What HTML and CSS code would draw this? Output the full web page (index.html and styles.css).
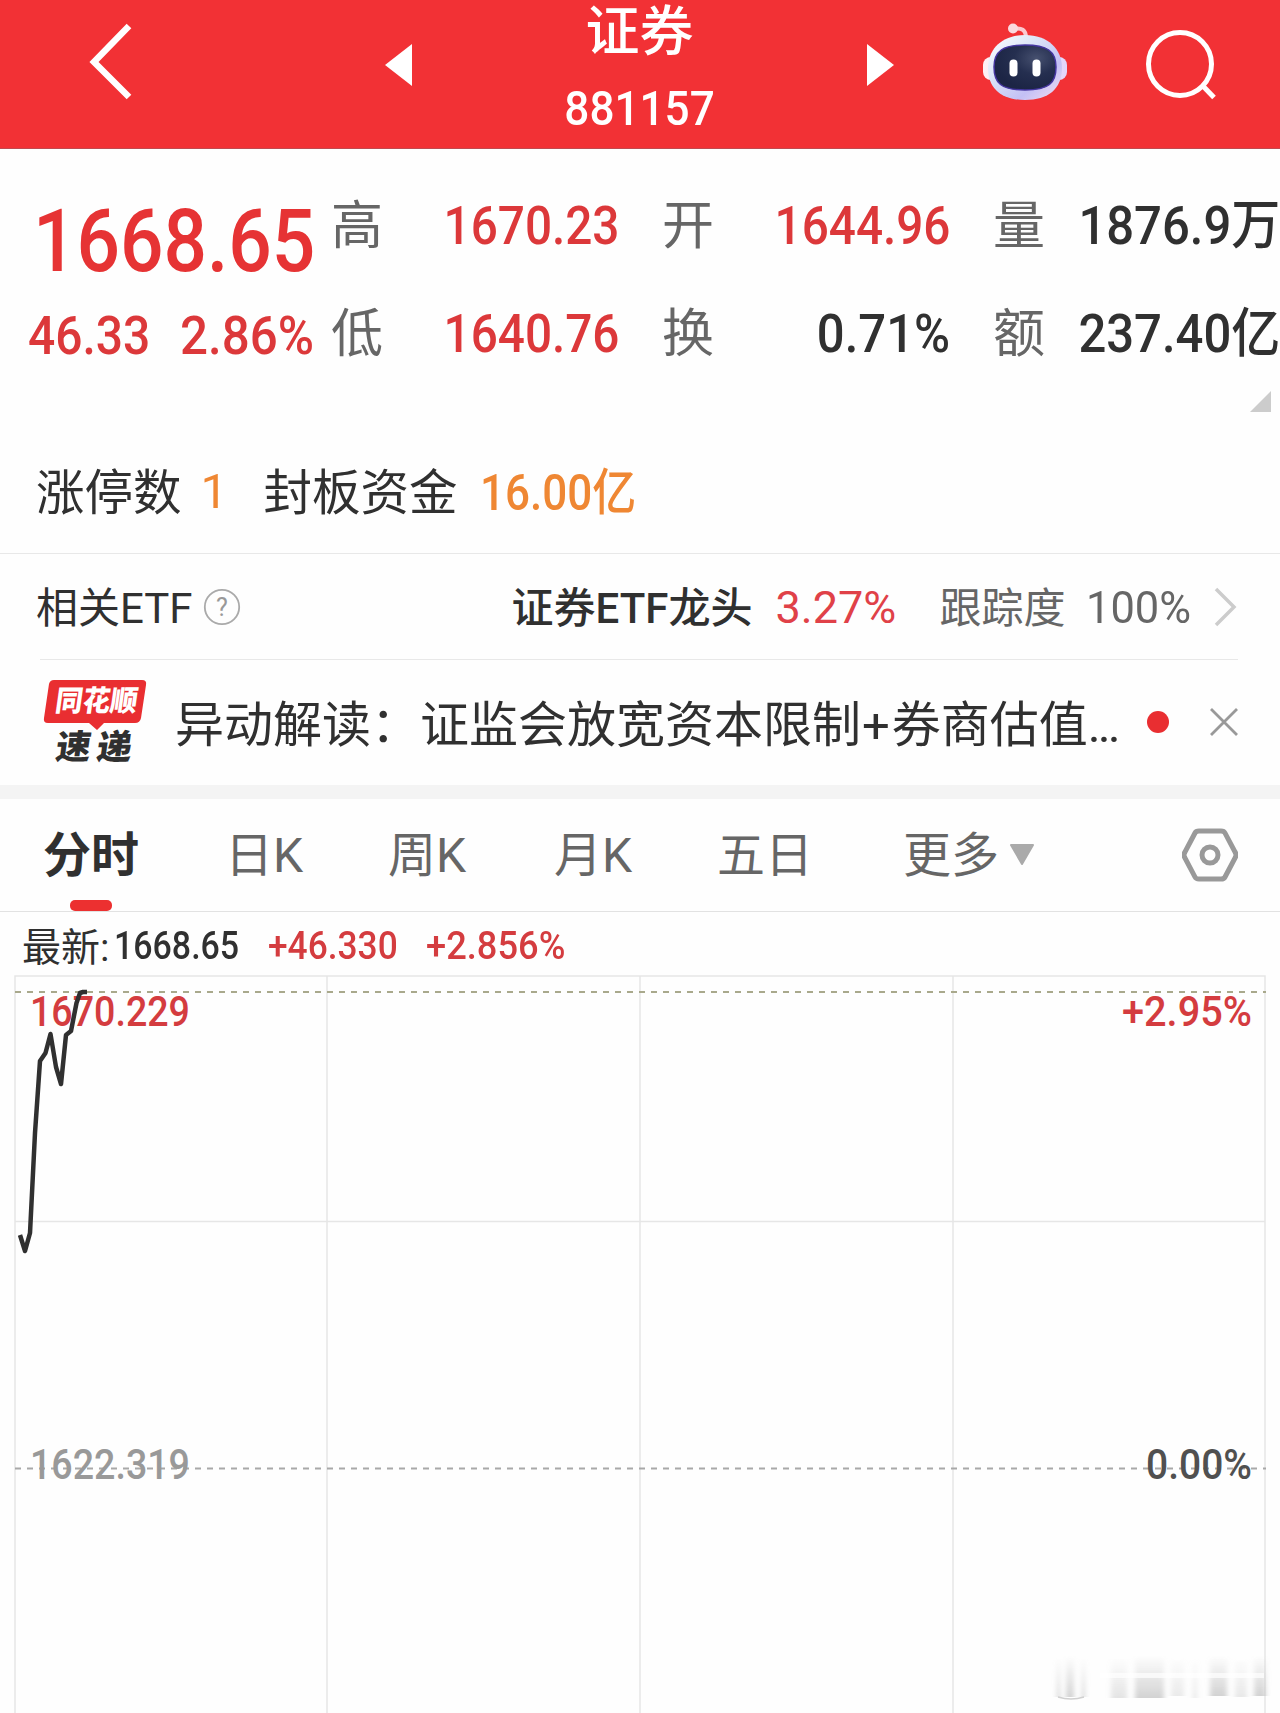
FILE: index.html
```html
<!DOCTYPE html>
<html lang="zh-CN">
<head>
<meta charset="utf-8">
<title>证券 881157</title>
<link rel="stylesheet" href="styles.css">
</head>
<body>
<header class="topbar">
  <svg class="back" width="50" height="80" viewBox="0 0 50 80"><path d="M44 5 9 41l35 35" fill="none" stroke="#fff" stroke-width="6.500"/></svg>
  <svg class="prev" width="27" height="42" viewBox="0 0 27 42"><path d="M27 0v42L0 21z" fill="#fff"/></svg>
  <div class="title">
    <h1>证券</h1>
    <div class="code"><span class="fit">881157</span></div>
  </div>
  <svg class="next" width="27" height="42" viewBox="0 0 27 42"><path d="M0 0v42l27-21z" fill="#fff"/></svg>
  <svg class="robot" width="86" height="82" viewBox="0 0 86 82">
    <defs>
      <linearGradient id="shell" x1="0" y1="0" x2="1" y2="1"><stop offset="0" stop-color="#fff"/><stop offset=".35" stop-color="#dce6f8"/><stop offset=".7" stop-color="#c3c0f5"/><stop offset="1" stop-color="#f6dff0"/></linearGradient>
      <linearGradient id="ear" x1="0" y1="0" x2="1" y2="0"><stop offset="0" stop-color="#fff0f4"/><stop offset="1" stop-color="#e3d5fb"/></linearGradient>
      <radialGradient id="visor" cx=".68" cy=".3" r=".7"><stop offset="0" stop-color="#46506f"/><stop offset=".5" stop-color="#252f50"/><stop offset="1" stop-color="#1c2545"/></radialGradient>
    </defs>
    <path d="M31 9q13-3 13 9" fill="none" stroke="#fbc9d0" stroke-width="4"/>
    <circle cx="31" cy="8.500" r="5" fill="#fbd9df"/>
    <rect x="1" y="37" width="84" height="23" rx="8" fill="url(#ear)"/>
    <path d="M43 15c23 0 37 14 37 33 0 21-14 32-37 32S6 69 6 48c0-19 14-33 37-33z" fill="url(#shell)"/>
    <path d="M43 25c22 0 31 6 31 22s-7 23-31 23-31-7-31-23 9-22 31-22z" fill="url(#visor)" stroke="#4536a0" stroke-width="1.500"/>
    <rect x="27.500" y="39.500" width="8" height="17" rx="4" fill="#fff"/>
    <rect x="50.500" y="39.500" width="8" height="17" rx="4" fill="#fff"/>
  </svg>
  <svg class="search" width="72" height="72" viewBox="0 0 72 72"><circle cx="34" cy="35" r="31.500" fill="none" stroke="#fff" stroke-width="5"/><path d="m56 56 12 12.500" stroke="#fff" stroke-width="5"/></svg>
</header>

<section class="quote">
  <div class="price">
    <div class="last"><span class="fit">1668.65</span></div>
    <div class="change"><span class="fit">46.33</span><span class="fit">2.86%</span></div>
  </div>
  <dl class="stats">
    <div><dt>高</dt><dd class="up">1670.23</dd></div>
    <div><dt>开</dt><dd class="up">1644.96</dd></div>
    <div><dt>量</dt><dd>1876.9万</dd></div>
    <div><dt>低</dt><dd class="up">1640.76</dd></div>
    <div><dt>换</dt><dd>0.71%</dd></div>
    <div><dt>额</dt><dd>237.40亿</dd></div>
  </dl>
</section>
<div class="expand"><svg width="21" height="21" viewBox="0 0 21 21"><path d="M21 0v21H0z" fill="#ccc"/></svg></div>

<section class="limit">
  <span>涨停数</span><b class="one">1</b><span class="seal">封板资金</span><b class="fund"><span class="fit">16.00亿</span></b>
</section>

<section class="etf">
  <span class="etf-key">相关ETF</span>
  <svg class="help" width="38" height="38" viewBox="0 0 38 38"><circle cx="19" cy="19" r="17.200" fill="none" stroke="#aaa" stroke-width="1.800"/><text x="19" y="27.500" text-anchor="middle" class="help-mark">?</text></svg>
  <span class="etf-name">证券ETF龙头</span><span class="etf-rate">3.27%</span><span class="track">跟踪度</span><span class="track-rate">100%</span>
  <svg class="more" width="24" height="40" viewBox="0 0 24 40"><path d="m2 2 18 18L2 38" fill="none" stroke="#ccc" stroke-width="3.500"/></svg>
</section>

<section class="news">
  <svg class="badge" width="110" height="108" viewBox="0 -10 110 108">
    <path d="M11 2h88q5 0 4 5l-5 33q-1 5-6 5H61l-7 7-8-7H5q-5 0-4-5l5-34q1-4 5-4z" fill="#e92e31"/>
    <g transform="skewX(-8)"><text x="16" y="33" textLength="82" lengthAdjust="spacingAndGlyphs" class="badge-top">同花顺</text>
    <text x="23" y="81" textLength="35" lengthAdjust="spacingAndGlyphs" class="badge-low">速</text><text x="64" y="81" textLength="35" lengthAdjust="spacingAndGlyphs" class="badge-low">递</text></g>
  </svg>
  <span class="headline">异动解读：证监会放宽资本限制<span class="plus">+</span>券商估值<span class="ellipsis">...</span></span>
  <i class="dot"></i>
  <svg width="28" height="28" viewBox="0 0 28 28"><path d="m1 1 26 26M27 1 1 27" stroke="#999" stroke-width="2.800"/></svg>
</section>

<nav class="tabs">
  <span class="tab active">分时</span><span class="tab">日K</span><span class="tab">周K</span><span class="tab">月K</span><span class="tab">五日</span><span class="tab">更多</span>
  <svg class="caret" width="26" height="22" viewBox="0 0 26 22"><path d="M2 1h22l-11 19z" fill="#aaa" stroke="#aaa" stroke-width="2" stroke-linejoin="round"/></svg>
  <svg class="settings" width="56" height="54" viewBox="0 0 56 54"><path d="M17 3h22q3 0 4 2l10 19q2 3 0 6L43 49q-1 2-4 2H17q-3 0-4-2L3 30q-2-3 0-6L13 5q1-2 4-2z" fill="none" stroke="#999" stroke-width="5"/><circle cx="28" cy="27" r="8" fill="none" stroke="#999" stroke-width="5"/></svg>
</nav>

<section class="latest"><span class="latest-key">最新:</span><span class="fit now">1668.65</span><span class="fit diff">+46.330</span><span class="fit rate">+2.856%</span></section>

<svg class="chart" width="1280" height="743" viewBox="0 970 1280 743">
  <defs>
    <linearGradient id="fade" x1="0" y1="0" x2="0" y2="1"><stop offset="0" stop-color="#bbb" stop-opacity="0"/><stop offset="1" stop-color="#bbb" stop-opacity=".65"/></linearGradient>
    <filter id="soft" x="-.3" width="1.600"><feGaussianBlur stdDeviation="2.500 .6"/></filter>
  </defs>
  <path d="M15 1713V976h1250v737M327 976v737M640 976v737M953 976v737M15 1221.500h1250" fill="none" stroke="#e6e6e6" stroke-width="1.500"/>
  <path d="M15 992h1251" stroke="#a9a98c" stroke-width="2" stroke-dasharray="6 6"/>
  <path d="M15 1468.500h1251" stroke="#a8a8a8" stroke-width="2" stroke-dasharray="6 6"/>
  <g class="axis">
    <text x="30" y="1026" textLength="160" lengthAdjust="spacingAndGlyphs" fill="#d43c3f">1670.229</text>
    <text x="1122" y="1026" textLength="130" lengthAdjust="spacingAndGlyphs" fill="#d43c3f">+2.95%</text>
    <text x="30" y="1479" textLength="160" lengthAdjust="spacingAndGlyphs" fill="#999">1622.319</text>
    <text x="1146" y="1479" textLength="106" lengthAdjust="spacingAndGlyphs" fill="#505050">0.00%</text>
  </g>
  <path d="m20 1235 5 16 5-18 5-100 5-72 5.500-8 5-19 5.500 33 5 17 5-49 5-4 5.500-28 3.500-10 3-1h4" fill="none" stroke="#303030" stroke-width="4.500" stroke-linejoin="round"/>
  <g fill="url(#fade)" filter="url(#soft)">
    <rect x="1057" y="1658" width="3" height="39"/><rect x="1066" y="1656" width="8" height="41"/><rect x="1082" y="1658" width="3" height="39"/>
    <rect x="1111" y="1658" width="16" height="40" opacity=".6"/><rect x="1135" y="1656" width="29" height="42"/>
    <rect x="1171" y="1658" width="13" height="38" opacity=".45"/><rect x="1193" y="1658" width="4" height="40" opacity=".5"/><rect x="1210" y="1656" width="17" height="40"/>
    <rect x="1235" y="1658" width="12" height="39" opacity=".5"/><rect x="1254" y="1656" width="12" height="40"/>
  </g>
  <path d="M1058 1697q13 4 26 0" fill="none" stroke="#d0d0d0" stroke-width="1.500"/>
  <path d="M1100 1675.500h164" stroke="#fff" stroke-opacity=".7" stroke-width="5"/>
</svg>
</body>
</html>
```
FILE: styles.css
```css
* { box-sizing: border-box; }
body, h1, dl, dd { margin: 0; }
body {
  width: 1280px;
  height: 1713px;
  overflow: hidden;
  background: #fefefe;
  color: #303030;
  font-family: Roboto, "Noto Sans CJK SC", sans-serif;
}
svg { display: block; flex: none; }
span, b { white-space: nowrap; }
.fit { display: inline-block; transform: scaleX(.93); transform-origin: left; }
.up { color: #dc383a; }

.topbar {
  display: flex;
  height: 149px;
  background: #f23135;
  border-bottom: 1px solid #c04a50;
  color: #fff;
}
.back { margin: 21px 0 0 85px; }
.prev { margin: 44px 0 0 250px; }
.title { width: 455px; text-align: center; }
.title h1 { font-size: 54px; line-height: 58px; font-weight: 500; padding-top: 4px; }
.code { font-size: 49px; line-height: 60px; font-weight: 500; margin-top: 17px; }
.code .fit { transform: scaleX(.9); transform-origin: center; }
.next { margin-top: 44px; }
.robot { margin: 20px 0 0 88px; }
.search { margin: 29px 0 0 78px; }

.quote { display: flex; height: 230px; padding-top: 22px; }
.price { width: 333px; font-weight: 500; color: #e63334; }
.last { margin: 20px 0 0 33px; font-size: 88px; line-height: 100px; }
.last .fit { transform: scaleX(.87); }
.change { display: flex; padding-left: 28px; margin-top: 14px; font-size: 53px; line-height: 62px; color: #dc383a; }
.change .fit:first-child { width: 152px; transform: scaleX(.905); }
.stats {
  display: grid;
  grid-template-columns: 286px 286px 285px;
  grid-template-rows: 108px 108px;
  column-gap: 45px;
  padding-top: 1px;
}
.stats div { display: flex; justify-content: space-between; align-items: center; }
.stats dt { font-size: 52px; line-height: 108px; color: #666; width: 52px; margin: 1px 0 0 -2px; }
.stats dd {
  font-size: 53px;
  line-height: 108px;
  font-weight: 500;
  white-space: nowrap;
  transform: scaleX(.925);
  transform-origin: right;
  margin-left: -40px;
}
.stats .up { transform: scaleX(.9); }
.expand { display: flex; justify-content: flex-end; height: 57px; padding: 12px 9px 0 0; }

.limit {
  display: flex;
  align-items: center;
  height: 118px;
  padding: 0 36px 11px;
  border-bottom: 1px solid #e8e8e8;
  font-size: 48.500px;
}
.limit b { font-weight: 400; color: #ef8733; }
.limit .one { margin: 4px 0 0 19px; width: 63px; }
.limit .fund { margin-left: 22px; font-size: 50px; line-height: 60px; font-weight: 500; padding-top: 7px; }
.fund .fit { transform: scaleX(.88); }

.etf { display: flex; align-items: center; height: 106px; padding-left: 36px; font-size: 42px; }
.help { margin: -1px 0 0 10px; }
.help-mark { font: 25px Roboto, sans-serif; fill: #999; }
.etf-key, .etf-name, .track { padding-bottom: 6px; }
.etf-name { font-weight: 500; margin-left: 271px; width: 264px; }
.etf-rate { color: #e04148; font-size: 45px; width: 164px; }
.track { color: #666; width: 146px; }
.track-rate { color: #666; font-size: 45px; width: 128px; transform: scaleX(.965); transform-origin: left; }

.news {
  display: flex;
  align-items: center;
  height: 126px;
  margin: -1px 42px 0 40px;
  padding-bottom: 1px;
  border-top: 1px solid #e8e8e8;
}
.badge { margin-left: 3px; }
.badge-top, .badge-low { font-family: "Noto Sans CJK SC", sans-serif; font-weight: 900; }
.badge-top { font-size: 29px; fill: #fff; }
.badge-low { font-size: 34px; fill: #303030; }
.headline { font-size: 49px; margin-left: 22px; width: 972px; padding-bottom: 4px; }
.plus { padding: 0 2px 0 1px; }
.ellipsis { letter-spacing: -3px; }
.dot { width: 22px; height: 22px; border-radius: 50%; background: #e92e31; margin-right: 41px; }

.tabs {
  display: flex;
  align-items: center;
  height: 127px;
  padding-left: 43px;
  border-top: 14px solid #f4f4f4;
  border-bottom: 1px solid #e2e2e2;
  font-size: 48px;
  color: #666;
}
.tab { height: 112px; line-height: 112px; padding-top: 1px; width: 163px; }
.tab.active {
  position: relative;
  width: 182px;
  color: #303030;
  font-weight: 700;
}
.tab.active::after {
  content: "";
  position: absolute;
  left: 27px;
  bottom: 0;
  width: 42px;
  height: 11px;
  border-radius: 5px;
  background: #ec3030;
}
.tab:nth-child(3) { width: 166px; }
.tab:nth-child(4) { width: 163px; }
.tab:nth-child(5) { width: 186px; }
.tab:nth-child(6) { width: 106px; }
.caret { margin-right: 147px; }

.latest { display: flex; align-items: center; height: 58px; padding: 9px 0 0 22px; font-size: 39px; font-weight: 500; }
.latest-key { font-weight: 400; width: 92px; padding-bottom: 4px; }
.latest .now { width: 154px; transform: scaleX(.87); }
.latest .diff { width: 158px; transform: scaleX(.905); color: #d43c3f; }
.latest .rate { color: #d43c3f; }
.axis { font: 500 42px Roboto, sans-serif; }
```
